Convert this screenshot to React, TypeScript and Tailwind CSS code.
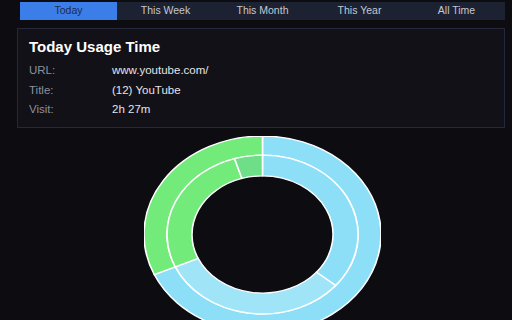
import React from "react";

const tabs = ["Today", "This Week", "This Month", "This Year", "All Time"];

const rows = [
  { label: "URL:", value: "www.youtube.com/" },
  { label: "Title:", value: "(12) YouTube" },
  { label: "Visit:", value: "2h 27m" },
];

type Slice = { from: number; to: number; color: string };

// outer ring then inner ring, angles in degrees clockwise from 12 o'clock
const outer: Slice[] = [
  { from: 0, to: 246, color: "#8ddff8" },
  { from: 246, to: 360, color: "#72eb7b" },
];

const inner: Slice[] = [
  { from: 0, to: 130, color: "#8ddff8" },
  { from: 130, to: 246, color: "#9fe4f7" },
  { from: 246, to: 343, color: "#72eb7b" },
  { from: 343, to: 360, color: "#6fde88" },
];

function pt(r: number, deg: number) {
  const a = (deg * Math.PI) / 180;
  return [120 + r * Math.sin(a), 120 - r * Math.cos(a)];
}

function arc(r0: number, r1: number, from: number, to: number) {
  const large = to - from > 180 ? 1 : 0;
  const [x1, y1] = pt(r1, from);
  const [x2, y2] = pt(r1, to);
  const [x3, y3] = pt(r0, to);
  const [x4, y4] = pt(r0, from);
  return `M${x1} ${y1} A${r1} ${r1} 0 ${large} 1 ${x2} ${y2} L${x3} ${y3} A${r0} ${r0} 0 ${large} 0 ${x4} ${y4} Z`;
}

function Donut() {
  return (
    <svg
      viewBox="0 0 240 240"
      preserveAspectRatio="none"
      className="h-[197px] w-[237px] shrink-0"
    >
      {outer.map((s, i) => (
        <path key={`o${i}`} d={arc(96.7, 120, s.from, s.to)} fill={s.color} stroke="#ffffff" strokeWidth="1.6" />
      ))}
      {inner.map((s, i) => (
        <path key={`i${i}`} d={arc(71.4, 96.7, s.from, s.to)} fill={s.color} stroke="#ffffff" strokeWidth="1.6" />
      ))}
    </svg>
  );
}

export default function App() {
  return (
    <div
      className="h-[320px] w-[512px] overflow-hidden bg-[#0d0c11]"
      style={{ fontFamily: '"Liberation Sans", Arial, sans-serif' }}
    >
      <div className="pl-[20px] pr-[7px] pt-[2px]">
        <div className="flex h-[18px] bg-[#1c2231]">
          {tabs.map((t, i) => (
            <div
              key={t}
              className={`flex flex-1 items-center justify-center text-[10.5px] ${
                i === 0 ? "bg-[#3b7eea] text-[#1c2c4c]" : "text-[#c4c8d2]"
              }`}
            >
              {t}
            </div>
          ))}
        </div>
      </div>

      <div className="ml-[17px] mr-[7px] mt-[8px] h-[100px] border border-[#25273a] bg-[#121117] px-[11px] pt-[9px]">
        <div className="text-[15px] font-bold leading-[18px] text-white">Today Usage Time</div>
        <div className="mt-[9px] flex flex-col gap-[7.5px]">
          {rows.map((r) => (
            <div key={r.label} className="flex h-[12px] items-center text-[11.5px]">
              <span className="w-[83px] text-[#8b909c]">{r.label}</span>
              <span className="text-[#e4e4e8]">{r.value}</span>
            </div>
          ))}
        </div>
      </div>

      <div className="flex justify-center pl-[13px] pt-[8px]">
        <Donut />
      </div>
    </div>
  );
}
